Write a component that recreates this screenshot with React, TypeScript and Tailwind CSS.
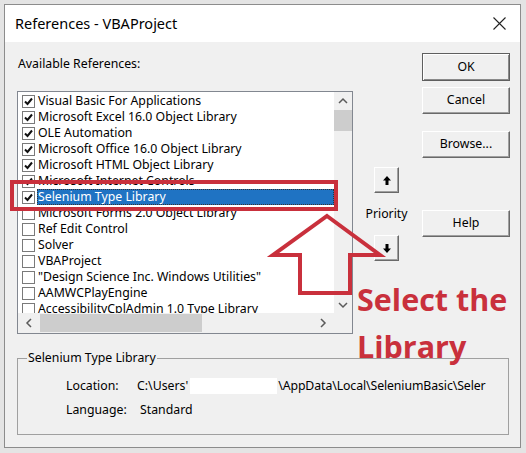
import React from "react";

const RED = "#c9303c";

const items: { label: string; checked: boolean; selected?: boolean }[] = [
  { label: "Visual Basic For Applications", checked: true },
  { label: "Microsoft Excel 16.0 Object Library", checked: true },
  { label: "OLE Automation", checked: true },
  { label: "Microsoft Office 16.0 Object Library", checked: true },
  { label: "Microsoft HTML Object Library", checked: true },
  { label: "Microsoft Internet Controls", checked: true },
  { label: "Selenium Type Library", checked: true, selected: true },
  { label: "Microsoft Forms 2.0 Object Library", checked: false },
  { label: "Ref Edit Control", checked: false },
  { label: "Solver", checked: false },
  { label: "VBAProject", checked: false },
  { label: "\"Design Science Inc. Windows Utilities\"", checked: false },
  { label: "AAMWCPlayEngine", checked: false },
  { label: "AccessibilityCplAdmin 1.0 Type Library", checked: false },
];

function CheckBox({ checked }: { checked: boolean }) {
  return (
    <div className="w-[13px] h-[13px] border border-[#7a7a7a] bg-white flex items-center justify-center shrink-0">
      {checked && (
        <svg width="9" height="9" viewBox="0 0 9 9">
          <path d="M1 4.5 L3.5 7 L8 1.5" fill="none" stroke="#111" strokeWidth="2" />
        </svg>
      )}
    </div>
  );
}

function Chevron({ dir }: { dir: "up" | "down" | "left" | "right" }) {
  const d =
    dir === "up"
      ? "M1 6 L5 2 L9 6"
      : dir === "down"
      ? "M1 2 L5 6 L9 2"
      : dir === "left"
      ? "M6 1 L2 5 L6 9"
      : "M2 1 L6 5 L2 9";
  const w = dir === "up" || dir === "down" ? 10 : 8;
  const h = dir === "up" || dir === "down" ? 8 : 10;
  return (
    <svg width={w} height={h} viewBox={`0 0 ${w} ${h}`}>
      <path d={d} fill="none" stroke="#5a5a5a" strokeWidth="1.5" />
    </svg>
  );
}

function Btn({ children, def, className }: { children: React.ReactNode; def?: boolean; className?: string }) {
  return (
    <div
      className={
        "w-[88px] h-[27px] flex items-center justify-center bg-[#f0f0f0] text-black " +
        (def
          ? "border border-[#5f5f5f] shadow-[inset_1px_1px_0_#ffffff,inset_-1px_-1px_0_#8a8a8a] "
          : "border border-t-white border-l-white border-r-[#696969] border-b-[#696969] shadow-[inset_-1px_-1px_0_#a0a0a0] ") +
        (className ?? "")
      }
    >
      {children}
    </div>
  );
}

function PrioBtn({ up, className }: { up: boolean; className?: string }) {
  return (
    <div
      className={
        "w-[25px] h-[26px] flex items-center justify-center bg-[#f0f0f0] border border-t-white border-l-white border-r-[#696969] border-b-[#696969] shadow-[inset_-1px_-1px_0_#a0a0a0] " +
        (className ?? "")
      }
    >
      <svg width="8" height="9" viewBox="0 0 8 9">
        {up ? (
          <path d="M4 0 L8 4.5 L5.5 4.5 L5.5 9 L2.5 9 L2.5 4.5 L0 4.5 Z" fill="#000" />
        ) : (
          <path d="M4 9 L8 4.5 L5.5 4.5 L5.5 0 L2.5 0 L2.5 4.5 L0 4.5 Z" fill="#000" />
        )}
      </svg>
    </div>
  );
}

export default function App() {
  return (
    <div
      className="relative w-[526px] h-[453px] overflow-hidden bg-[#e4e4e4] pt-[4px] pl-[4px] text-[12.3px] text-black"
      style={{ fontFamily: '"Noto Sans", "Open Sans", sans-serif' }}
    >
      <div className="w-[517px] h-[444px] border border-[#8c8c8c] flex flex-col">
        {/* Title bar */}
        <div className="h-[37px] bg-white flex items-center pl-[10px] pr-[14px] shrink-0">
          <span className="text-[14.5px] flex-1">References - VBAProject</span>
          <svg width="13" height="13" viewBox="0 0 13 13">
            <path d="M0.5 0.5 L12.5 12.5 M12.5 0.5 L0.5 12.5" stroke="#222" strokeWidth="1.1" />
          </svg>
        </div>

        {/* Body */}
        <div className="flex-1 bg-[#f0f0f0] flex flex-col">
          <div className="flex">
            {/* Left column */}
            <div className="ml-[12px] w-[336px] flex flex-col">
              <div className="mt-[14px] h-[16px] leading-[16px] ml-[1px]">Available References:</div>
              <div className="mt-[19px] h-[243px] border border-[#828790] bg-white flex flex-col">
                <div className="flex flex-1 min-h-0">
                  <div className="flex-1 overflow-hidden pt-[1px]">
                    {items.map((it, i) => (
                      <div key={i} className="h-[16px] flex items-center pl-[4px] whitespace-nowrap">
                        <CheckBox checked={it.checked} />
                        {it.selected ? (
                          <div className="ml-[2px] flex-1 h-[16px] bg-[#1f73c3] text-white leading-[16px] pl-[1px] outline outline-1 outline-dotted outline-[#333] -outline-offset-1">
                            {it.label}
                          </div>
                        ) : (
                          <span className="ml-[3px] leading-[16px]">{it.label}</span>
                        )}
                      </div>
                    ))}
                  </div>
                  {/* vertical scrollbar */}
                  <div className="w-[18px] bg-[#f0f0f0] flex flex-col">
                    <div className="h-[18px] flex items-center justify-center">
                      <Chevron dir="up" />
                    </div>
                    <div className="h-[21px] bg-[#cdcdcd]" />
                    <div className="flex-1" />
                    <div className="h-[17px] flex items-center justify-center">
                      <Chevron dir="down" />
                    </div>
                  </div>
                </div>
                {/* horizontal scrollbar */}
                <div className="h-[20px] flex shrink-0">
                  <div className="flex-1 bg-[#f0f0f0] flex items-center">
                    <div className="w-[22px] flex items-center justify-center">
                      <Chevron dir="left" />
                    </div>
                    <div className="w-[162px] h-[18px] bg-[#cdcdcd]" />
                    <div className="flex-1" />
                    <div className="w-[22px] flex items-center justify-center">
                      <Chevron dir="right" />
                    </div>
                  </div>
                  <div className="w-[18px] bg-[#f0f0f0]" />
                </div>
              </div>
            </div>

            {/* Priority column */}
            <div className="ml-[21px] w-[25px] flex flex-col items-center">
              <PrioBtn up className="mt-[125px]" />
              <div className="mt-[13px] h-[16px] leading-[16px] whitespace-nowrap">Priority</div>
              <PrioBtn up={false} className="mt-[13px]" />
            </div>

            {/* Buttons column */}
            <div className="ml-[23px] flex flex-col">
              <Btn def className="mt-[11px] h-[28px]">OK</Btn>
              <Btn className="mt-[6px]">Cancel</Btn>
              <Btn className="mt-[17px]">Browse...</Btn>
              <Btn className="mt-[52px]">Help</Btn>
            </div>
          </div>

          {/* Group box */}
          <div className="relative mt-[24px] ml-[12px] w-[492px] h-[77px] border border-[#a0a0a0]">
            <div className="absolute left-[9px] -top-[9px] px-[1px] bg-[#f0f0f0] leading-[16px]">
              Selenium Type Library
            </div>
            <div className="pl-[48px] pt-[19px] flex flex-col gap-[8px]">
              <div className="flex h-[16px] leading-[16px]">
                <span className="w-[71px]">Location:</span>
                <div className="flex items-center whitespace-nowrap">
                  <span>C:\Users'</span>
                  <span className="inline-block ml-[2px] w-[87px] h-[16px] bg-white shrink-0" />
                  <span className="ml-[1px] tracking-[-0.1px]">\AppData\Local\SeleniumBasic\Seler</span>
                </div>
              </div>
              <div className="flex h-[16px] leading-[16px]">
                <span className="w-[74px]">Language:</span>
                <span>Standard</span>
              </div>
            </div>
          </div>
        </div>
      </div>

      {/* Annotations */}
      <div className="absolute left-[10px] top-[180px] w-[328px] h-[31px] border-4 border-[#c9303c]" />
      <svg className="absolute left-0 top-0 pointer-events-none" width="526" height="453" viewBox="0 0 526 453">
        <polygon
          points="327,216 380,255 350,255 350,293 300,293 300,255 273,255"
          fill="none"
          stroke={RED}
          strokeWidth="4"
          strokeLinejoin="miter"
        />
      </svg>
      <div
        className="absolute left-[357px] top-[276px] text-[30.5px] font-bold leading-[47px] text-[#c9303c]"
        style={{ fontFamily: '"Open Sans", "Noto Sans", sans-serif' }}
      >
        Select the
        <br />
        Library
      </div>
    </div>
  );
}
